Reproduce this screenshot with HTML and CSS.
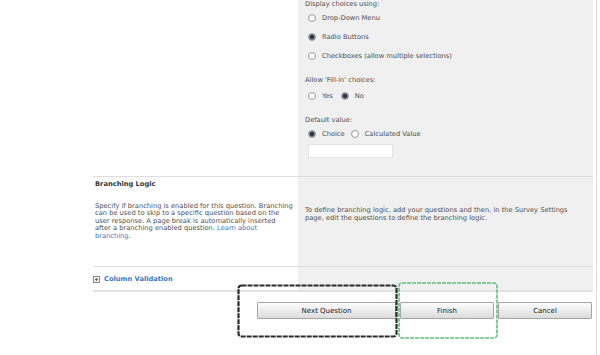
FILE: index.html
```html
<!DOCTYPE html>
<html>

<head>
    <title>New Question</title>
    <meta charset="utf-8">
    <link rel="stylesheet" href="styles.css">
</head>

<body>
    <div class="page">
        <div class="sheet">
            <div class="section top">
                <div class="label-col"></div>
                <div class="field-col">
                    <div class="field-title first">Display choices using:</div>
                    <div class="option first-option"><span class="radio"></span>Drop-Down Menu</div>
                    <div class="option"><span class="radio checked"></span>Radio Buttons</div>
                    <div class="option"><span class="radio"></span>Checkboxes (allow multiple selections)</div>

                    <div class="field-title fill-in">Allow 'Fill-in' choices:</div>
                    <div class="option yes-no">
                        <span class="radio"></span>Yes
                        <span class="radio checked next"></span>No
                    </div>

                    <div class="field-title default">Default value:</div>
                    <div class="option choice">
                        <span class="radio checked"></span>Choice
                        <span class="radio next"></span>Calculated Value
                    </div>
                    <div class="textbox"></div>
                </div>
            </div>

            <div class="section branching">
                <div class="label-col">
                    <h3>Branching Logic</h3>
                    <p class="desc">Specify if branching is enabled for this question. Branching<br>
                        can be used to skip to a specific question based on the<br>
                        user response. A page break is automatically inserted<br>
                        after a branching enabled question. <a href="#">Learn about<br>
                        branching</a>.</p>
                </div>
                <div class="field-col">
                    <p class="note">To define branching logic, add your questions and then, in the Survey Settings<br>
                        page, edit the questions to define the branching logic.</p>
                </div>
            </div>

            <div class="section validation">
                <div class="label-col">
                    <a href="#" class="expander"><span class="plus"></span>Column Validation</a>
                </div>
                <div class="field-col"></div>
            </div>

            <div class="buttons">
                <button class="btn wide">Next Question</button>
                <button class="btn">Finish</button>
                <button class="btn">Cancel</button>
            </div>
        </div>

        <!-- hand-drawn highlight boxes over the buttons -->
        <svg class="mark dark" width="161" height="54">
            <rect x="1.5" y="1.5" width="158" height="51" rx="3" fill="none" stroke="#2a2a2a" stroke-width="2.2" stroke-dasharray="5 1" />
        </svg>
        <svg class="mark green" width="100" height="57">
            <rect x="1" y="1" width="98" height="55" rx="3" fill="none" stroke="#5fbd76" stroke-width="1.6" stroke-dasharray="4 1" />
        </svg>
    </div>
</body>

</html>
```
FILE: styles.css
```css
body {
    margin: 0;
    padding: 0;
    background: white;
    font-family: "DejaVu Sans", sans-serif;
    font-size: 6.7px;
    color: #4f4f4f;
}

.page {
    position: relative;
    width: 503px;
    height: 355px;
    padding-left: 93px;
    border-right: 1px solid #dcdcdc;
    overflow: hidden;
}

.sheet {
    width: 500px;
}

.section {
    display: grid;
    grid-template-columns: 205px 295px;
}

.field-col {
    background: #f0f0f0;
    padding-left: 7px;
}

/* top part, scrolled so the first label is cut */
.top .field-col {
    height: 176px;
    overflow: hidden;
}

.field-title,
.option {
    height: 8px;
    line-height: 8px;
}

.option {
    display: flex;
    align-items: center;
    margin-top: 11px;
}

.field-title.first {
    margin-top: 0;
}

.option.first-option {
    margin-top: 6px;
}

.field-title.fill-in {
    margin-top: 16px;
}

.option.yes-no {
    margin-top: 8px;
}

.field-title.default {
    margin-top: 16px;
}

.option.choice {
    margin-top: 6px;
}

.radio {
    width: 6px;
    height: 6px;
    border: 1px solid #9a9a9a;
    border-radius: 50%;
    background: #fafafa;
    margin-left: 3px;
    margin-right: 6px;
}

.radio.checked {
    background: radial-gradient(circle, #28303c 0, #354050 2px, #9aa6b8 3px);
}

.radio.next {
    margin-left: 8px;
}

.option.choice .radio.next {
    margin-left: 6px;
}

.textbox {
    width: 83px;
    height: 12px;
    margin-top: 6px;
    margin-left: 3px;
    background: white;
    border: 1px solid #e4e4e4;
}

.branching {
    border-top: 1px solid #dedede;
    height: 89px;
}

.branching h3 {
    margin: 3px 0 0 2px;
    font-size: 6.7px;
    line-height: 9px;
    color: #333;
    font-weight: bold;
}

.desc {
    margin: 14px 0 0 2px;
    line-height: 7.4px;
    white-space: nowrap;
}

a {
    color: #3b79c0;
    text-decoration: none;
}

.note {
    margin: 29px 0 0 0;
    line-height: 8px;
    white-space: nowrap;
}

.validation {
    border-top: 1px solid #dedede;
    border-bottom: 2px solid #e2e2e2;
    height: 23px;
}

.expander {
    display: flex;
    align-items: center;
    font-weight: bold;
    margin-top: 8px;
    line-height: 8px;
}

.plus {
    width: 5px;
    height: 5px;
    border: 1px solid #8a8a8a;
    margin-right: 4px;
    background: linear-gradient(#6a6a6a, #6a6a6a) center / 3px 1px no-repeat,
        linear-gradient(#6a6a6a, #6a6a6a) center / 1px 3px no-repeat, #eee;
}

.buttons {
    display: flex;
    justify-content: flex-end;
    gap: 4px;
    padding-top: 10px;
    padding-right: 1px;
}

.btn {
    width: 94px;
    height: 17px;
    padding: 0;
    border: 1px solid #a6a6a6;
    border-radius: 1px;
    background: linear-gradient(#fdfdfd, #ececec 50%, #dcdcdc);
    font-family: "DejaVu Sans", sans-serif;
    font-size: 7px;
    color: #222;
}

.btn.wide {
    width: 139px;
}

.mark {
    position: absolute;
}

.mark.dark {
    left: 237px;
    top: 284px;
}

.mark.green {
    left: 398px;
    top: 282px;
}
```
